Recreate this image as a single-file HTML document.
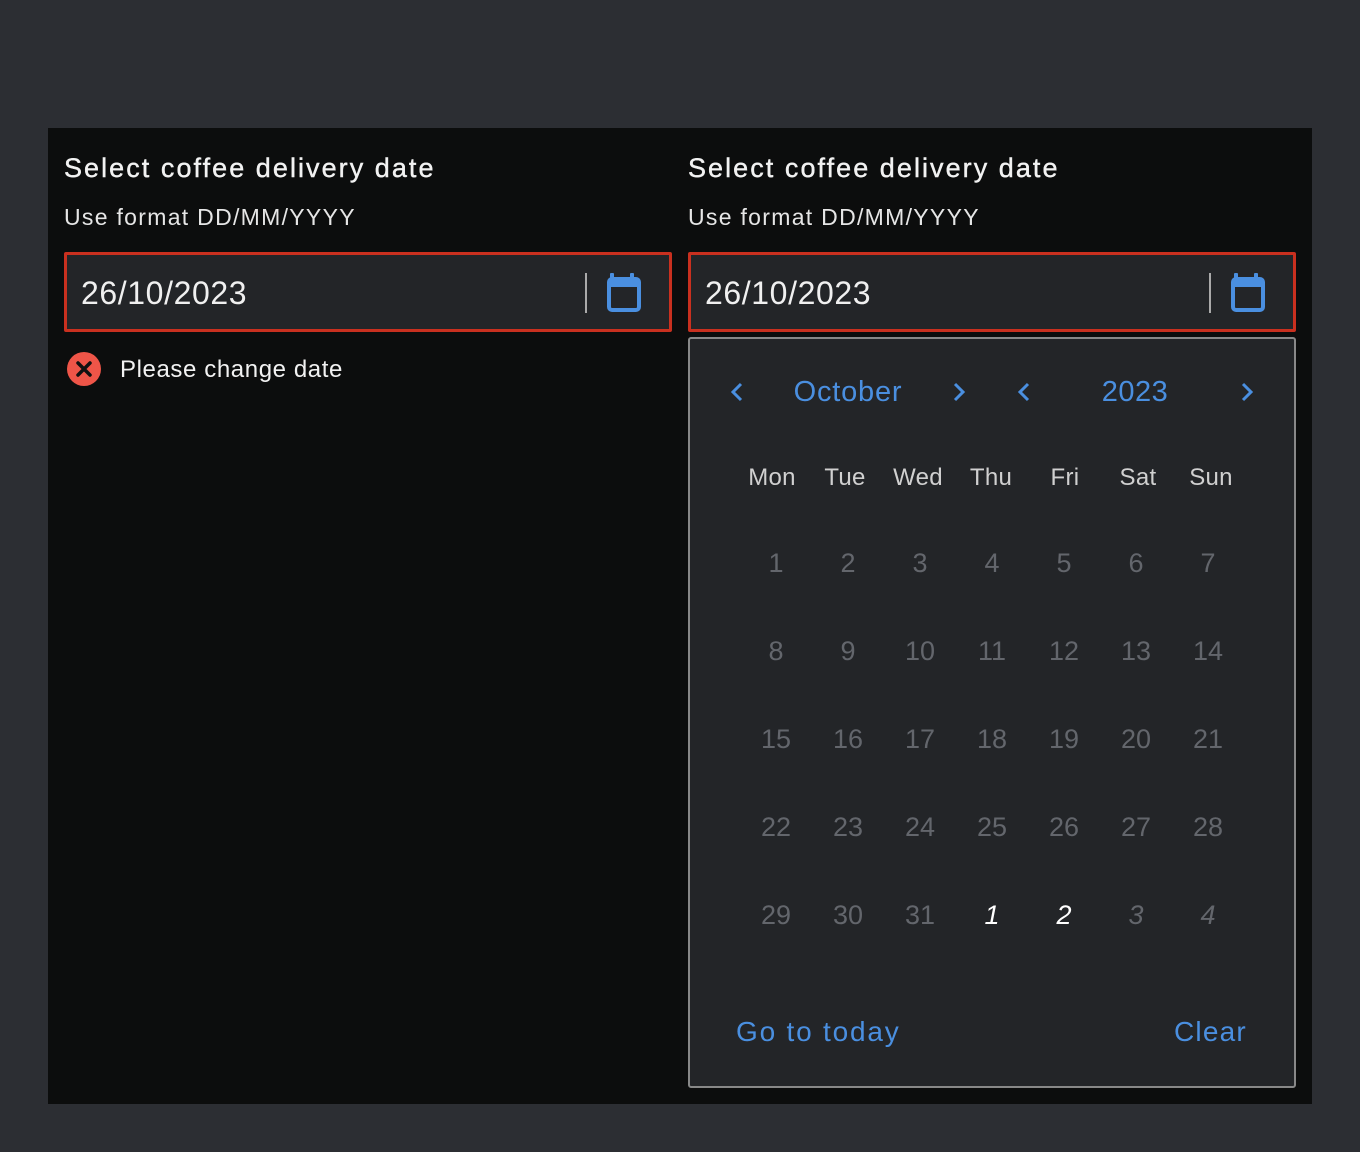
<!DOCTYPE html>
<html><head><meta charset="utf-8"><style>
*{margin:0;padding:0;box-sizing:border-box}
body{width:1360px;height:1152px;background:#2c2e33;font-family:"Liberation Sans",sans-serif;position:relative;overflow:hidden}
.panel{position:absolute;left:48px;top:128px;width:1264px;height:976px;background:#0c0d0d}
.t{position:absolute;white-space:nowrap}
.title{font-size:27px;color:#f2f2f2;letter-spacing:2.05px;top:153px;-webkit-text-stroke:0.4px #f2f2f2}
.sub{font-size:23px;color:#e6e6e6;letter-spacing:1.3px;top:204px}
.inp{position:absolute;top:252px;width:608px;height:80px;border:3px solid #c9301f;border-radius:2px;background:#232528}
.inp .v{position:absolute;left:14px;top:20px;font-size:32px;color:#f0f0f0;letter-spacing:0.6px}
.inp .sep{position:absolute;left:518px;top:18px;width:2px;height:40px;background:#aaa}
.inp svg{position:absolute;left:539px;top:18px}
.pop{position:absolute;left:688px;top:337px;width:608px;height:751px;background:#232528;border:2px solid #888;border-radius:3px}
.c{position:absolute;transform:translateX(-50%);white-space:nowrap}
.blue{color:#4a8fe0}
.hd{font-size:24px;color:#d0d0d0;top:464px;letter-spacing:0.3px}
.d{font-size:27px;color:#63666c}
</style></head><body>
<div class="panel"></div>
<div class="t title" style="left:64px">Select coffee delivery date</div>
<div class="t title" style="left:688px">Select coffee delivery date</div>
<div class="t sub" style="left:64px">Use format DD/MM/YYYY</div>
<div class="t sub" style="left:688px">Use format DD/MM/YYYY</div>

<div class="inp" style="left:64px"><div class="t v">26/10/2023</div><div class="sep"></div>
<svg width="36" height="40" viewBox="0 0 36 40"><rect x="4" y="0" width="4" height="8" rx="1" fill="#4a8fe0"/><rect x="24" y="0" width="4" height="8" rx="1" fill="#4a8fe0"/><rect x="3" y="6" width="30" height="31" rx="3" fill="none" stroke="#4a8fe0" stroke-width="4"/><rect x="3" y="6" width="30" height="8" fill="#4a8fe0"/></svg></div>
<div class="inp" style="left:688px"><div class="t v">26/10/2023</div><div class="sep"></div>
<svg width="36" height="40" viewBox="0 0 36 40"><rect x="4" y="0" width="4" height="8" rx="1" fill="#4a8fe0"/><rect x="24" y="0" width="4" height="8" rx="1" fill="#4a8fe0"/><rect x="3" y="6" width="30" height="31" rx="3" fill="none" stroke="#4a8fe0" stroke-width="4"/><rect x="3" y="6" width="30" height="8" fill="#4a8fe0"/></svg></div>

<svg style="position:absolute;left:66px;top:351px" width="36" height="36" viewBox="0 0 36 36"><circle cx="18" cy="18" r="17" fill="#ef5548"/><path d="M12 12L24 24M24 12L12 24" stroke="#111" stroke-width="3.5" stroke-linecap="round"/></svg>
<div class="t" style="left:120px;top:356px;font-size:24px;color:#f2f2f2;letter-spacing:0.6px">Please change date</div>

<div class="pop"></div>
<svg style="position:absolute;left:728px;top:381px" width="20" height="22"><path d="M13 3L5 11L13 19" stroke="#4a8fe0" stroke-width="3" fill="none"/></svg>
<div class="c blue" style="left:848px;top:376px;font-size:29px;letter-spacing:0.8px">October</div>
<svg style="position:absolute;left:950px;top:381px" width="20" height="22"><path d="M5 3L13 11L5 19" stroke="#4a8fe0" stroke-width="3" fill="none"/></svg>
<svg style="position:absolute;left:1015px;top:381px" width="20" height="22"><path d="M13 3L5 11L13 19" stroke="#4a8fe0" stroke-width="3" fill="none"/></svg>
<div class="c blue" style="left:1135px;top:376px;font-size:29px;letter-spacing:0.5px">2023</div>
<svg style="position:absolute;left:1238px;top:381px" width="20" height="22"><path d="M5 3L13 11L5 19" stroke="#4a8fe0" stroke-width="3" fill="none"/></svg>

<div class="c hd" style="left:772px">Mon</div>
<div class="c hd" style="left:845px">Tue</div>
<div class="c hd" style="left:918px">Wed</div>
<div class="c hd" style="left:991px">Thu</div>
<div class="c hd" style="left:1065px">Fri</div>
<div class="c hd" style="left:1138px">Sat</div>
<div class="c hd" style="left:1211px">Sun</div>

<div class="c d" style="left:776px;top:548px">1</div><div class="c d" style="left:848px;top:548px">2</div><div class="c d" style="left:920px;top:548px">3</div><div class="c d" style="left:992px;top:548px">4</div><div class="c d" style="left:1064px;top:548px">5</div><div class="c d" style="left:1136px;top:548px">6</div><div class="c d" style="left:1208px;top:548px">7</div>
<div class="c d" style="left:776px;top:636px">8</div><div class="c d" style="left:848px;top:636px">9</div><div class="c d" style="left:920px;top:636px">10</div><div class="c d" style="left:992px;top:636px">11</div><div class="c d" style="left:1064px;top:636px">12</div><div class="c d" style="left:1136px;top:636px">13</div><div class="c d" style="left:1208px;top:636px">14</div>
<div class="c d" style="left:776px;top:724px">15</div><div class="c d" style="left:848px;top:724px">16</div><div class="c d" style="left:920px;top:724px">17</div><div class="c d" style="left:992px;top:724px">18</div><div class="c d" style="left:1064px;top:724px">19</div><div class="c d" style="left:1136px;top:724px">20</div><div class="c d" style="left:1208px;top:724px">21</div>
<div class="c d" style="left:776px;top:812px">22</div><div class="c d" style="left:848px;top:812px">23</div><div class="c d" style="left:920px;top:812px">24</div><div class="c d" style="left:992px;top:812px">25</div><div class="c d" style="left:1064px;top:812px">26</div><div class="c d" style="left:1136px;top:812px">27</div><div class="c d" style="left:1208px;top:812px">28</div>
<div class="c d" style="left:776px;top:900px">29</div><div class="c d" style="left:848px;top:900px">30</div><div class="c d" style="left:920px;top:900px">31</div>
<div class="c d" style="left:992px;top:900px;color:#fff;font-style:italic">1</div><div class="c d" style="left:1064px;top:900px;color:#fff;font-style:italic">2</div>
<div class="c d" style="left:1136px;top:900px;font-style:italic">3</div><div class="c d" style="left:1208px;top:900px;font-style:italic">4</div>

<div class="t blue" style="left:736px;top:1016px;font-size:28px;letter-spacing:1.8px">Go to today</div>
<div class="t blue" style="left:1174px;top:1016px;font-size:28px;letter-spacing:1.2px">Clear</div>
</body></html>
